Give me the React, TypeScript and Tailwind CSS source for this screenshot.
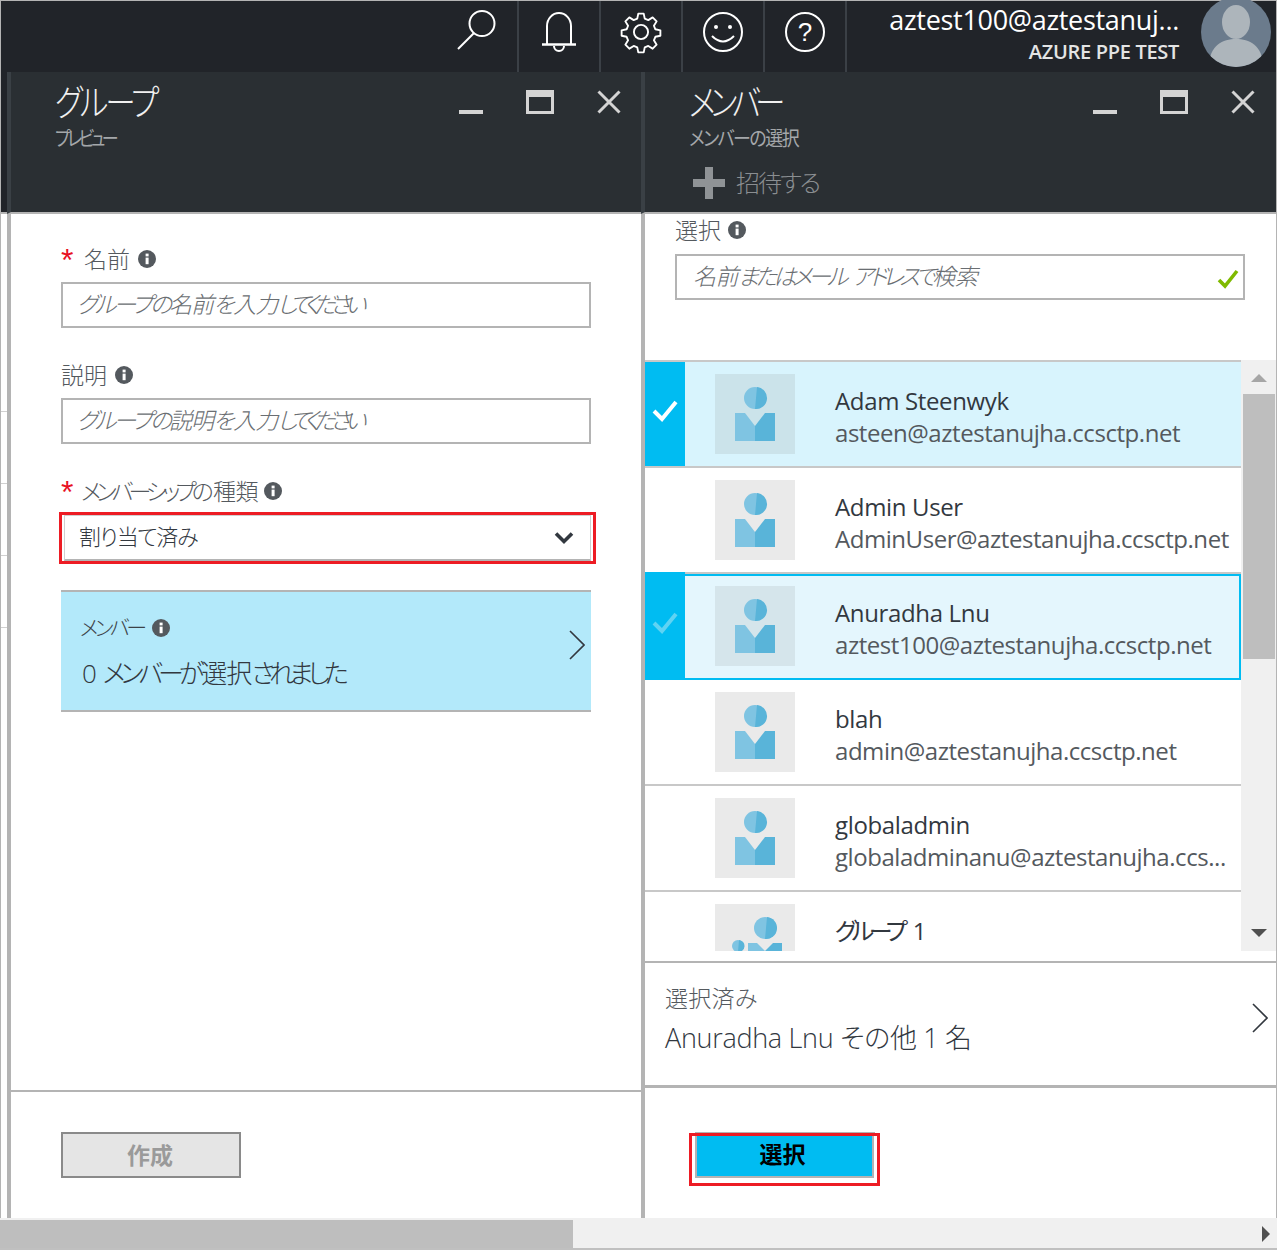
import React from "react";

const base = "font-['Open_Sans','Noto_Sans_CJK_JP',sans-serif] [font-feature-settings:'palt']";

function Info({ className = "" }: { className?: string }) {
  return (
    <svg viewBox="0 0 18 18" className={"w-[18px] h-[18px] shrink-0 " + className}>
      <circle cx="9" cy="9" r="9" fill="#54595e" />
      <rect x="7.6" y="7.6" width="3" height="6.6" fill="#fff" />
      <rect x="7.6" y="3.6" width="3" height="2.8" fill="#fff" />
    </svg>
  );
}

function Star() {
  return <span className="text-[#e81123] text-[32px] leading-none w-[23px] h-[20px] -mt-[10px] font-['Liberation_Sans',sans-serif]">*</span>;
}

function Chevron({ className = "" }: { className?: string }) {
  return (
    <svg viewBox="0 0 16 30" className={"w-[16px] h-[30px] shrink-0 " + className}>
      <path d="M1 1 L15 15 L1 29" fill="none" stroke="#32383f" strokeWidth="1.6" />
    </svg>
  );
}

function WinControls() {
  return (
    <div className="flex items-start">
      <div className="w-[24px] h-[4px] mt-[38px] bg-[#d4d4d4]" />
      <div className="w-[28px] h-[24px] ml-[43px] mt-[18px] border-[3px] border-t-[7px] border-[#d4d4d4]" />
      <svg viewBox="0 0 24 24" className="w-[24px] h-[24px] ml-[43px] mt-[18px]">
        <path d="M1.5 1.5 L22.5 22.5 M22.5 1.5 L1.5 22.5" stroke="#d4d4d4" strokeWidth="3" fill="none" />
      </svg>
    </div>
  );
}

function Person({ bg }: { bg: string }) {
  return (
    <svg viewBox="0 0 80 80" className="w-[80px] h-[80px] shrink-0 block" style={{ background: bg }}>
      <ellipse cx="40" cy="24" rx="11" ry="11" fill="#7fc4e2" />
      <path d="M42 13 A11 11 0 0 1 40 35 Z" fill="#59b4d9" />
      <path d="M20 39 L30 39 L40 52 L40 67 L20 67 Z" fill="#7fc4e2" />
      <path d="M60 39 L50 39 L40 52 L40 67 L60 67 Z" fill="#59b4d9" />
    </svg>
  );
}

function GroupAvatar() {
  return (
    <svg viewBox="0 0 80 47" className="w-[80px] h-[47px] shrink-0 block bg-[#eaeaea]">
      <ellipse cx="50" cy="24" rx="11" ry="11" fill="#7fc4e2" />
      <path d="M52 13 A11 11 0 0 1 50 35 Z" fill="#59b4d9" />
      <ellipse cx="23" cy="42" rx="6" ry="6" fill="#7fc4e2" />
      <path d="M24 36 A6 6 0 0 1 23 48 Z" fill="#59b4d9" />
      <path d="M33 47 L33 39 L42 39 L50 47 Z" fill="#7fc4e2" />
      <path d="M67 47 L67 39 L58 39 L50 47 Z" fill="#59b4d9" />
    </svg>
  );
}

function Check({ color }: { color: string }) {
  return (
    <svg viewBox="0 0 26 22" className="w-[26px] h-[22px]">
      <path d="M2 11 L10 19 L24 2" fill="none" stroke={color} strokeWidth="4" />
    </svg>
  );
}

const rows = [
  { name: "Adam Steenwyk", mail: "asteen@aztestanujha.ccsctp.net", state: "sel" },
  { name: "Admin User", mail: "AdminUser@aztestanujha.ccsctp.net", state: "" },
  { name: "Anuradha Lnu", mail: "aztest100@aztestanujha.ccsctp.net", state: "focus" },
  { name: "blah", mail: "admin@aztestanujha.ccsctp.net", state: "" },
  { name: "globaladmin", mail: "globaladminanu@aztestanujha.ccs...", state: "" },
];

function Row({ name, mail, state }: { name: string; mail: string; state: string }) {
  const sel = state === "sel";
  const focus = state === "focus";
  const bg = sel ? "bg-[#d8f4fd]" : focus ? "bg-[#e4f6fd]" : "bg-white";
  return (
    <div className={"flex h-[106px] " + bg + (focus ? "" : " border-b-2 border-[#c8c8c8]")}>
      <div className={"w-[40px] shrink-0 flex items-center justify-center pb-[6px] " + (sel ? "bg-[#00bcf2]" : focus ? "bg-[#00bcf2] -mt-[2px]" : "")}>
        {sel && <Check color="#ffffff" />}
        {focus && <Check color="#5fd3f3" />}
      </div>
      <div className={"flex flex-1 min-w-0 " + (focus ? "border-2 border-l-0 border-[#00bcf2] pt-[10px] pl-[30px]" : "pt-[12px] pl-[30px]")}>
        <Person bg={sel ? "#cbe3ea" : focus ? "#d5e5eb" : "#eaeaea"} />
        <div className="ml-[40px] pt-[11px] min-w-0 whitespace-nowrap">
          <div className="text-[24px] leading-[32px] text-[#32383f] tracking-[-0.35px]">{name}</div>
          <div className="text-[24px] leading-[32px] text-[#54595e] tracking-[-0.45px]">{mail}</div>
        </div>
      </div>
    </div>
  );
}

function GroupPlaceholder({ word }: { word: string }) {
  return (
    <div className="mt-[6px] h-[46px] border-2 border-[#b4b4b4] pl-[14px] pb-[2px] flex items-center text-[23px] italic font-light text-[#6a6e72] whitespace-nowrap">
      <span className="tracking-[-3px]">グループの</span>
      <span className="tracking-[-1px]">{word}を入力</span>
      <span className="tracking-[-6.3px]">してください</span>
    </div>
  );
}

export default function App() {
  return (
    <div className={"w-[1277px] h-[1250px] flex flex-col overflow-hidden bg-white " + base}>
      {/* Top bar */}
      <div className="h-[72px] shrink-0 flex bg-[#212429] border-t border-l border-r border-[#b4b4b4]">
        <div className="flex-1" />
        <div className="w-[81px] h-full flex items-center justify-center border-r-2 border-[#3b4046] pb-[15px] pr-[1px]">
          <svg viewBox="0 0 42 42" className="w-[42px] h-[42px]">
            <circle cx="26" cy="15.5" r="12.5" fill="none" stroke="#fff" strokeWidth="2" />
            <path d="M18 25 L2 41" stroke="#fff" strokeWidth="2" fill="none" />
          </svg>
        </div>
        <div className="w-[82px] h-full flex items-center justify-center border-r-2 border-[#3b4046] pb-[9px]">
          <svg viewBox="0 0 36 42" className="w-[36px] h-[42px]">
            <path d="M6 33 V15 A12 13 0 0 1 30 15 V33" fill="none" stroke="#fff" strokeWidth="2" />
            <path d="M1 33.5 H35" stroke="#fff" strokeWidth="2.4" />
            <path d="M13 35 A5 5 0 0 0 23 35" fill="none" stroke="#fff" strokeWidth="2" />
          </svg>
        </div>
        <div className="w-[82px] h-full flex items-center justify-center border-r-2 border-[#3b4046] pb-[9px]">
          <svg viewBox="0 0 24 24" className="w-[50px] h-[50px]" fill="none" stroke="#fff" strokeWidth="0.9" strokeLinejoin="round">
            <path d="M12 3.2 l1.3 0 .5 2.4 1.7 .7 2.1-1.3 1.9 1.9 -1.3 2.1 .7 1.7 2.4 .5 0 2.6 -2.4 .5 -.7 1.7 1.3 2.1 -1.9 1.9 -2.1-1.3 -1.7 .7 -.5 2.4 -2.6 0 -.5-2.4 -1.7-.7 -2.1 1.3 -1.9-1.9 1.3-2.1 -.7-1.7 -2.4-.5 0-2.6 2.4-.5 .7-1.7 -1.3-2.1 1.9-1.9 2.1 1.3 1.7-.7 .5-2.4 z" />
            <circle cx="12" cy="12" r="3.4" />
          </svg>
        </div>
        <div className="w-[82px] h-full flex items-center justify-center border-r-2 border-[#3b4046] pb-[9px]">
          <svg viewBox="0 0 40 40" className="w-[40px] h-[40px]" fill="none" stroke="#fff" strokeWidth="2">
            <circle cx="20" cy="20" r="19" />
            <circle cx="13" cy="15" r="2" fill="#fff" stroke="none" />
            <circle cx="27" cy="15" r="2" fill="#fff" stroke="none" />
            <path d="M9 24 Q20 35 31 24" />
          </svg>
        </div>
        <div className="w-[82px] h-full flex items-center justify-center border-r-2 border-[#3b4046] pb-[9px]">
          <div className="w-[40px] h-[40px] rounded-full border-2 border-white flex items-center justify-center text-white text-[26px] leading-none font-['Liberation_Sans',sans-serif]">?</div>
        </div>
        <div className="w-[354px] pr-[22px] flex flex-col items-end text-white whitespace-nowrap">
          <div className="text-[27px] leading-[36px] pt-[1px] tracking-[-0.3px] h-[37px]">aztest100@aztestanuj...</div>
          <div className="text-[20px] leading-[26px] font-semibold text-[#e4e4e4] tracking-[-0.3px] mt-[1px]">AZURE PPE TEST</div>
        </div>
        <div className="w-[75px] h-full">
          <div className="w-[70px] h-[70px] rounded-full overflow-hidden -mt-[4px] bg-[#6b7b8c]">
            <svg viewBox="0 0 70 70" className="w-[70px] h-[70px] block">
              <ellipse cx="35" cy="25" rx="14" ry="17" fill="#adb5bb" />
              <path d="M8 70 C8 48 22 42 35 42 C48 42 62 48 62 70 Z" fill="#adb5bb" />
            </svg>
          </div>
        </div>
      </div>

      {/* Main blades */}
      <div className="flex-1 min-h-0 flex">
        {/* left strip */}
        <div className="w-[7px] shrink-0 flex flex-col bg-white border-l border-[#b4b4b4]">
          <div className="h-[142px] bg-[#212429] border-b-2 border-[#b4b4b4]" />
          <div className="h-[198px] border-b border-[#d0d0d0]" />
          <div className="h-[72px] border-b border-[#d0d0d0]" />
          <div className="h-[72px] border-b border-[#d0d0d0]" />
          <div className="h-[72px] border-b border-[#d0d0d0]" />
        </div>

        {/* Group blade */}
        <div className="w-[634px] shrink-0 flex flex-col border-l-[4px] border-[#b4b4b4]">
          <div className="h-[142px] shrink-0 bg-[#2a2f33] -ml-[4px] border-l-[4px] border-l-[#3a4045] border-b-2 border-b-[#b4b4b4] flex justify-between pl-[44px] pr-[20px]">
            <div className="pt-[9px] whitespace-nowrap">
              <div className="text-[36px] leading-[44px] font-light text-[#f0f0f0] tracking-[-3.5px] origin-left scale-x-[0.85]">グループ</div>
              <div className="text-[20px] leading-[26px] mt-[1px] text-[#a4a7aa] tracking-[-4px] origin-left scale-x-[0.85]">プレビュー</div>
            </div>
            <WinControls />
          </div>
          <div className="flex-1 flex flex-col min-h-0">
            <div className="flex-1 pl-[50px] pr-[50px] pt-[28px] text-[#54595e]">
              <div className="flex items-center h-[34px]">
                <Star />
                <span className="text-[23px] leading-[34px] font-light">名前</span>
                <Info className="ml-[8px]" />
              </div>
              <GroupPlaceholder word="名前" />
              <div className="flex items-center h-[34px] mt-[30px]">
                <span className="text-[23px] leading-[34px] font-light">説明</span>
                <Info className="ml-[8px]" />
              </div>
              <GroupPlaceholder word="説明" />
              <div className="flex items-center h-[34px] mt-[30px] whitespace-nowrap">
                <Star />
                <span className="text-[23px] leading-[34px] font-light tracking-[-4.9px] -ml-[3px]">メンバーシップの</span>
                <span className="text-[23px] leading-[34px] font-light tracking-[-0.5px] ml-[4px]">種類</span>
                <Info className="ml-[6px]" />
              </div>
              <div className="mt-[4px] -ml-[2px] w-[537px] h-[52px] border-[3px] border-[#ed1c24] pl-[2px] pr-[2px]">
                <div className="h-[46px] border border-[#d0d0d0] border-b-2 border-b-[#b4b4b4] pl-[14px] pr-[16px] flex items-center justify-between text-[22px] text-[#32383f] font-light tracking-[-1.3px]">
                  <span className="-mt-[2px]">割り当て済み</span>
                  <svg viewBox="0 0 20 14" className="w-[20px] h-[14px]">
                    <path d="M2 2.5 L10 10.5 L18 2.5" fill="none" stroke="#32383f" strokeWidth="3.6" />
                  </svg>
                </div>
              </div>
              <div className="mt-[26px] h-[122px] bg-[#b3e9fa] border-y-2 border-[#b4b4b4] pl-[19px] pr-[6px] flex items-center justify-between whitespace-nowrap">
                <div>
                  <div className="flex items-center h-[34px] mt-[1px]">
                    <span className="text-[21px] font-light text-[#3c4247] tracking-[-3.5px]">メンバー</span>
                    <Info className="ml-[8px]" />
                  </div>
                  <div className="flex text-[26px] leading-[40px] mt-[8px] ml-[2px] text-[#32383f] font-light">
                    <span className="mr-[6px]">0</span>
                    <span className="tracking-[-5px]">メンバーが</span>
                    <span className="tracking-[-1px] ml-[2px]">選択</span>
                    <span className="tracking-[-5.6px]">されました</span>
                  </div>
                </div>
                <Chevron className="-mt-[12px]" />
              </div>
            </div>
            <div className="h-[128px] shrink-0 border-t-2 border-[#b4b4b4] pl-[50px] pt-[40px]">
              <div className="w-[180px] h-[46px] border-2 border-[#8a8a8a] bg-[#e5e5e5] pr-[2px] flex items-center justify-center text-[23px] font-semibold text-[#9a9a9a]">作成</div>
            </div>
          </div>
        </div>

        {/* Member blade */}
        <div className="flex-1 min-w-0 flex flex-col border-l-[4px] border-r border-[#b4b4b4]">
          <div className="h-[142px] shrink-0 bg-[#2a2f33] -ml-[4px] border-l-[4px] border-l-[#3a4045] border-b-2 border-b-[#b4b4b4] flex justify-between pl-[44px] pr-[21px]">
            <div className="pt-[9px] whitespace-nowrap">
              <div className="text-[36px] leading-[44px] font-light text-[#f0f0f0] tracking-[-6.5px] origin-left scale-x-[0.85]">メンバー</div>
              <div className="text-[20px] leading-[26px] mt-[1px] text-[#a4a7aa] tracking-[-1.7px] origin-left scale-x-[0.9]">メンバーの選択</div>
              <div className="flex items-center mt-[15px] ml-[4px]">
                <svg viewBox="0 0 32 32" className="w-[32px] h-[32px]">
                  <path d="M12 0 H20 V12 H32 V20 H20 V32 H12 V20 H0 V12 H12 Z" fill="#8f9396" />
                </svg>
                <span className="text-[24px] leading-[32px] font-light text-[#8a8e91] ml-[11px] tracking-[-2px]">招待する</span>
              </div>
            </div>
            <WinControls />
          </div>

          <div className="h-[146px] shrink-0 pl-[30px] pr-[31px]">
            <div className="flex items-center h-[34px] text-[#54595e] -mt-[1px]">
              <span className="text-[23px] leading-[34px] font-light">選択</span>
              <Info className="ml-[7px]" />
            </div>
            <div className="mt-[7px] h-[46px] border-2 border-[#b4b4b4] pl-[16px] pr-[4px] flex items-center justify-between text-[23px] italic font-light text-[#6a6e72] whitespace-nowrap">
              <span className="-mt-[2px] flex">
                <span className="tracking-[-0.5px]">名前</span>
                <span className="tracking-[-4px]">またはメール</span>
                <span className="tracking-[-4.4px] ml-[8px]">アドレスで</span>
                <span className="tracking-[-0.5px]">検索</span>
              </span>
              <svg viewBox="0 0 22 20" className="w-[22px] h-[20px] mt-[3px]">
                <path d="M2 11 L8 17 L20 2" fill="none" stroke="#7fba00" strokeWidth="3.6" />
              </svg>
            </div>
          </div>

          <div className="flex h-[591px] shrink-0">
            <div className="flex-1 min-w-0 border-t-2 border-[#c8c8c8] overflow-hidden">
              {rows.map((r) => (
                <Row key={r.name} {...r} />
              ))}
              <div className="flex pl-[70px] pt-[12px] bg-white">
                <GroupAvatar />
                <div className="flex ml-[40px] pt-[11px] text-[24px] leading-[32px] text-[#32383f] whitespace-nowrap">
                  <span className="tracking-[-5.2px]">グループ</span>
                  <span className="ml-[10px]">1</span>
                </div>
              </div>
            </div>
            <div className="w-[35px] shrink-0 h-[591px] bg-[#f0f0f0] flex flex-col items-center">
              <div className="h-[34px] w-full flex items-center justify-center pt-[2px]">
                <div className="w-0 h-0 border-x-[8px] border-x-transparent border-b-[8px] border-b-[#a6a6a6]" />
              </div>
              <div className="w-[32px] h-[265px] bg-[#bebebe]" />
              <div className="flex-1 w-full flex items-end justify-center pb-[14px]">
                <div className="w-0 h-0 border-x-[8px] border-x-transparent border-t-[8px] border-t-[#505050]" />
              </div>
            </div>
          </div>

          <div className="h-[10px] shrink-0" />
          <div className="h-[124px] shrink-0 border-t-2 border-[#b4b4b4] pl-[20px] pr-[8px] flex items-center justify-between whitespace-nowrap">
            <div className="-mt-[8px]">
              <div className="text-[23px] leading-[30px] font-light text-[#54595e] tracking-[0.3px]">選択済み</div>
              <div className="text-[27px] leading-[38px] font-light text-[#32383f] mt-[6px] tracking-[-0.3px]">Anuradha Lnu その他 1 名</div>
            </div>
            <Chevron className="-mt-[12px]" />
          </div>
          <div className="flex-1 min-h-0 border-t-[3px] border-[#b4b4b4] pl-[44px] pt-[44px]">
            <div className="w-[180px] h-[1px] ml-[6px] bg-[#b4b4b4]" />
            <div className="w-[191px] h-[53px] border-[3px] border-[#ed1c24] px-[3px]">
              <div className="h-[42px] bg-[#00bcf2] border-x-2 border-b-2 border-[#b4b4b4] pr-[4px] pb-[3px] flex items-center justify-center text-[23px] font-semibold text-black">選択</div>
            </div>
          </div>
        </div>
      </div>

      {/* Horizontal scrollbar */}
      <div className="h-[32px] shrink-0 bg-[#f0f0f0] border-b-2 border-[#c0c0c0] flex pt-[2px]">
        <div className="w-[573px] bg-[#bebebe]" />
        <div className="flex-1 flex items-center justify-end pr-[7px]">
          <div className="w-0 h-0 border-y-[8px] border-y-transparent border-l-[8px] border-l-[#505050]" />
        </div>
      </div>
    </div>
  );
}
